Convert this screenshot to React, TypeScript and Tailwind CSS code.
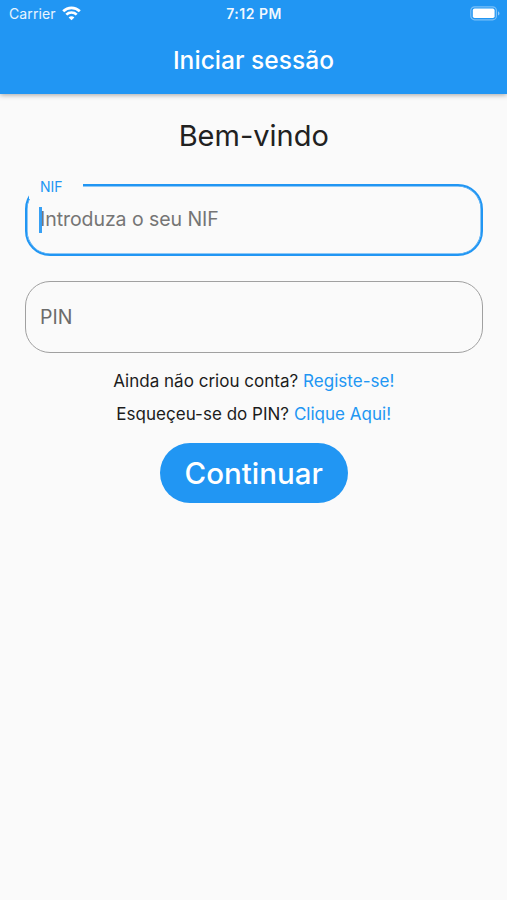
import React from "react";

function StatusBar() {
  return (
    <div className="grid h-[27px] grid-cols-3 items-center pl-[9px] pr-[6px]">
      <div className="flex items-center gap-[6px]">
        <span className="text-[14px] leading-[27px] tracking-[0.1px] text-white/90">Carrier</span>
        <svg width="19" height="15" viewBox="0 0 19 15" fill="none" stroke="white" strokeWidth="2.7">
          <path d="M1.2 5.3C5.8 .7 13.2 .7 17.8 5.3" />
          <path d="M4.3 8.6c2.9-2.8 7.5-2.8 10.4 0" />
          <path d="M9.5 14.2 6.6 11.4c1.6-1.5 4.2-1.5 5.8 0z" fill="white" stroke="none" />
        </svg>
      </div>
      <span className="-ml-[2px] text-center text-[14px] font-semibold leading-[27px] tracking-[0.5px] text-white/95">7:12 PM</span>
      <svg className="justify-self-end" width="31" height="15" viewBox="0 0 31 15">
        <rect x="0.8" y="0.8" width="25.6" height="13" rx="3.8" fill="none" stroke="white" strokeOpacity="0.4" strokeWidth="1.2" />
        <rect x="2.8" y="2.6" width="21.8" height="9.4" rx="1.8" fill="white" />
        <path d="M28 5.2c2 .8 2 3.6 0 4.4z" fill="white" fillOpacity="0.5" />
      </svg>
    </div>
  );
}

export default function App() {
  return (
    <div className="flex h-[900px] w-[507px] flex-col overflow-hidden bg-[#fafafa] font-['Inter',sans-serif]">
      <header className="h-[94px] shrink-0 bg-[#2196f3] shadow-[0_1px_5px_rgba(0,0,0,0.35)]">
        <StatusBar />
        <h1 className="mt-[17px] text-center text-[24.5px] font-medium leading-[32px] tracking-[0.05px] text-white">Iniciar sessão</h1>
      </header>
      <main className="flex flex-col items-center pl-[25px] pr-[24.5px]">
        <h2 className="mt-[24px] text-[29px] leading-[36px] text-[#212121]">Bem-vindo</h2>
        <div className="relative mt-[30px] flex h-[72px] w-full items-center rounded-[25px] border-2 border-[#2196f3] pl-[13px] shadow-[inset_0_0_0_0.5px_#2196f3]">
          <span className="absolute -top-[6px] left-[2px] h-[19px] w-[54px] bg-[#fafafa] pl-[11px] text-[14px] leading-[14px] text-[#2196f3]">NIF</span>
          <span className="absolute left-[12px] top-[21px] h-[26px] w-[3px] bg-[#2196f3]/90" />
          <span className="-mt-[2px] text-[19.5px] leading-[24px] tracking-[-0.06px] text-[#757575]">Introduza o seu NIF</span>
        </div>
        <div className="mt-[25px] flex h-[72px] w-full items-center rounded-[25px] border border-[#a0a0a0] pl-[14px]">
          <span className="text-[19.5px] leading-[24px] text-[#6c6c6c]">PIN</span>
        </div>
        <p className="mt-[16px] text-[17px] leading-[24px] tracking-[0.02px] text-[#1c1c1c]">
          Ainda não criou conta? <a className="text-[#2196f3]">Registe-se!</a>
        </p>
        <p className="mt-[9px] text-[17px] leading-[24px] tracking-[0.02px] text-[#1c1c1c]">
          Esqueçeu-se do PIN? <a className="text-[#2196f3]">Clique Aqui!</a>
        </p>
        <button className="mt-[17px] h-[60px] w-[188px] rounded-full bg-[#2196f3] text-[29.5px] font-medium leading-[60px] text-white">Continuar</button>
      </main>
    </div>
  );
}
